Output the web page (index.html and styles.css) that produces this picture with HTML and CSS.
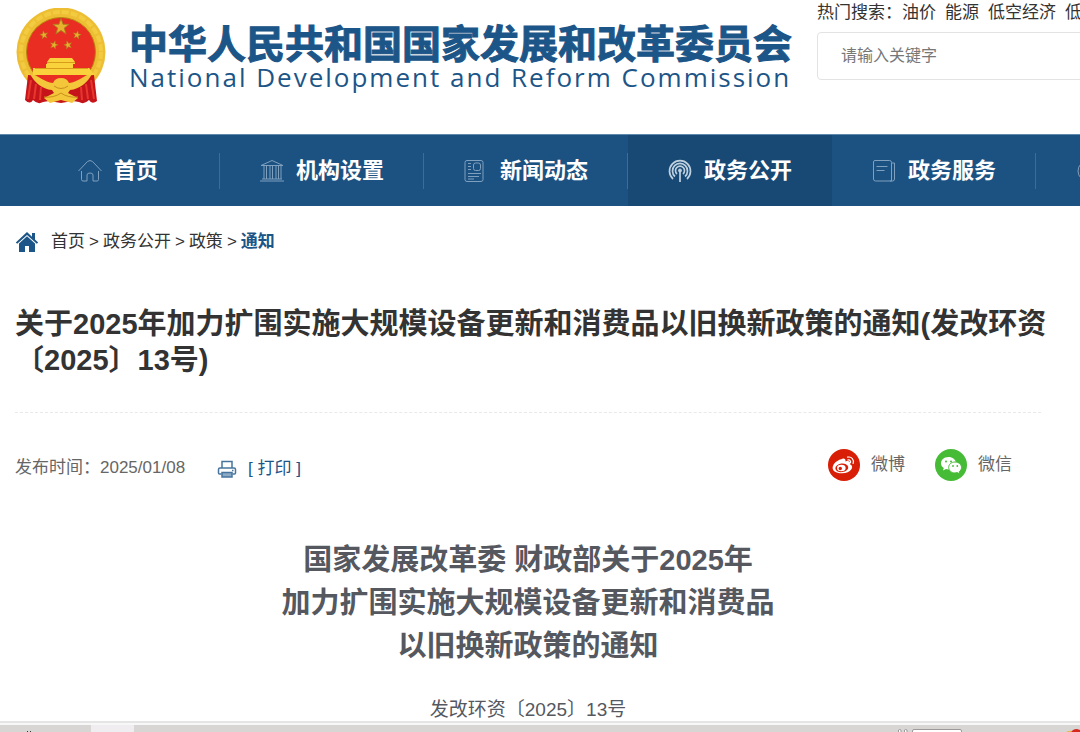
FILE: index.html
```html
<!DOCTYPE html>
<html lang="zh-CN">
<head>
<meta charset="utf-8">
<meta name="viewport" content="width=device-width, initial-scale=1">
<title>关于2025年加力扩围实施大规模设备更新和消费品以旧换新政策的通知</title>
<link rel="stylesheet" href="styles.css">
</head>
<body>
<header class="site-header">
  <a class="brand" href="#">
    <svg class="emblem" viewBox="0 0 90 96" aria-hidden="true">
      <defs><path id="star" d="M0-10 2.400-3.200 9.500-3.100 3.800 1.200 5.900 8.100 0 4-5.900 8.100-3.800 1.200-9.500-3.100-2.400-3.200Z"/></defs>
      <circle cx="45" cy="44" r="44.500" fill="#edbe33"/>
      <circle cx="45" cy="44" r="40" fill="none" stroke="#f3cb40" stroke-width="4" stroke-dasharray="7 2"/>
      <circle cx="45" cy="44" r="34.500" fill="#e92d22" stroke="#b8860f" stroke-width="1"/>
      <g fill="#e8b02c" stroke="#a77a1c" stroke-width="1">
        <use href="#star" transform="translate(45 19) scale(.86)"/>
        <use href="#star" transform="translate(28 27) scale(.43) rotate(-12)"/>
        <use href="#star" transform="translate(61 27) scale(.43) rotate(12)"/>
        <use href="#star" transform="translate(38 37) scale(.43) rotate(15)"/>
        <use href="#star" transform="translate(52 37) scale(.43) rotate(-15)"/>
      </g>
      <path fill="#fad33c" d="M34 50h22l3 4v2h-2v4h16l5 7H17v-7h13v-4h1v-2z"/>
      <path fill="#c5141a" d="M12 67c9 0 11 8 21 9l12 2 12-2c10-1 12-9 21-9l3 26q-5 4-8-1-5 5-10 2l-6-1-12 2-12-2-6 1q-5 3-10-2-3 5-8 0z"/>
      <path d="M15 72l-3 19M20 76l-2 15M25 79l-1 13M75 72l3 19M70 76l2 15M65 79l1 13" stroke="#e8382e" stroke-width="2"/>
      <path fill="#f4c63a" d="M14 66c10 2 14 8 23 9q2-5 8-5t8 5c9-1 13-7 23-9-5 9-12 15-22 16l-2 3 10 5-6 5-11-3-11 3-6-5 10-5-2-3C26 81 19 75 14 66z"/>
      <path d="M17 60h56l5 7H17z" fill="#fad33c"/>
      <path d="M31 54.500h28M19 60.500h53" stroke="#d99b1a" fill="none"/>
      <path d="M38 78q7 5 14 0M28 89q10 1 17-4 7 5 17 4" stroke="#c98f1b" fill="none"/>
    </svg>
    <span class="brand-text">
      <span class="brand-cn">中华人民共和国国家发展和改革委员会</span>
      <span class="brand-en">National Development and Reform Commission</span>
    </span>
  </a>
  <div class="search">
    <div class="hot"><span>热门搜索：</span><a href="#">油价</a><a href="#">能源</a><a href="#">低空经济</a><a href="#">低空</a></div>
    <input class="search-box" type="text" aria-label="搜索" placeholder="请输入关键字">
  </div>
</header>

<nav class="main-nav" aria-label="主导航">
  <a class="nav-item" href="#">
    <svg class="nav-icon" viewBox="0 0 24 24"><path d="M.5 12 9.500 2.500Q12 .5 14.500 2.500L23.500 12M3.500 12v8.500q0 1.500 1.500 1.500h4v-6q0-2 3-2t3 2v6h4q1.500 0 1.500-1.500V12"/></svg>首页</a>
  <a class="nav-item" href="#">
    <svg class="nav-icon" viewBox="0 0 24 24"><path d="M1 6.500 12 1.500l11 5zM0 22h24M2 20h20M4 7v13M6.500 7v13M10 7v13M12.500 7v13M16 7v13M18.500 7v13M21 7v13"/></svg>机构设置</a>
  <a class="nav-item" href="#">
    <svg class="nav-icon" viewBox="0 0 24 24"><rect x="1" y="1.500" width="18" height="21" rx="2"/><path d="M4 4.500h3M4 7.500h3M4 10.500h3M4 14.500h13M4 17.500h11M4 20h6"/><rect x="9.500" y="4" width="7" height="7.500" rx="2"/></svg>新闻动态</a>
  <a class="nav-item active" href="#" aria-current="page">
    <svg class="nav-icon" viewBox="0 0 24 24"><path stroke-width="1.700" d="M5 20A10.500 10.500 0 1 1 19 20M7 17.500a7.500 7.500 0 1 1 10 0M9 15a4.500 4.500 0 1 1 6 0M12 11v12"/><circle cx="12" cy="11.500" r="1.500" fill="currentColor"/></svg>政务公开</a>
  <a class="nav-item" href="#">
    <svg class="nav-icon" viewBox="0 0 24 24"><path d="M3 1.500h14.500q2 0 2 2V22H3.500q-2 0-2-2V3q0-1.500 1.500-1.500zM4.500 7.500h11M4.500 11.500h8M20 4h2.500v16q0 2-2 2H18"/></svg>政务服务</a>
  <a class="nav-item" href="#">
    <svg class="nav-icon" viewBox="0 0 24 24"><circle cx="12" cy="12" r="10"/><path d="M7 9h10M7 14h7"/></svg>互动交流</a>
</nav>

<main class="page">
  <nav class="crumbs" aria-label="当前位置">
    <svg class="home" viewBox="0 0 24 22" aria-hidden="true"><path d="M12 1 .8 11.500l1.400 1.300L12 4l9.800 8.800 1.400-1.300L20 8.500V2h-3v3.700zM12 5.300l-8 7.200V21h6v-6h4v6h6v-8.500z"/></svg>
    <a href="#">首页</a><span>&gt;</span><a href="#">政务公开</a><span>&gt;</span><a href="#">政策</a><span>&gt;</span><a class="current" href="#">通知</a>
  </nav>

  <h1 class="title">关于2025年加力扩围实施大规模设备更新和消费品以旧换新政策的通知(发改环资〔2025〕13号)</h1>

  <div class="content">
    <div class="meta">
      <span class="date">发布时间：2025/01/08</span>
      <button class="print" type="button">
        <svg class="printer" viewBox="0 0 20 18" aria-hidden="true"><path d="M5 8V1.500h10V8M4.500 14H2.500Q1.500 14 1.500 13V9.500Q1.500 8 3 8h14q1.500 0 1.500 1.500V13q0 1-1 1h-2M15 10.500h1.500"/><path class="tray" d="M5 12.500h10V17H5z"/></svg>
        [ 打印 ]</button>
      <div class="share">
        <a href="#"><svg class="share-icon" viewBox="0 0 32 32" aria-hidden="true"><circle cx="16" cy="16" r="16" fill="#d81e06"/><path fill="#fff" d="M14 10c2-1 4 0 3.500 2.500 3-1 5.500 0 4.500 2.800 5 2.200 1 9-8 9C3 24.300 2.500 17 8.500 12.500q3-2.500 5.500-2.500z"/><ellipse cx="13.800" cy="18.800" rx="6.500" ry="4.300" fill="#d81e06" transform="rotate(-8 13.800 18.800)"/><ellipse cx="13.300" cy="19" rx="4.300" ry="3.200" fill="#fff"/><circle cx="12.300" cy="19.500" r="1.700" fill="#d81e06"/><path d="M19.500 8.200c4-1 7 2.500 5.600 6.300M19.800 11c2-.5 3.300 1 2.700 2.800" fill="none" stroke="#fff" stroke-width="1.200" stroke-linecap="round"/></svg>微博</a>
        <a href="#"><svg class="share-icon" viewBox="0 0 32 32" aria-hidden="true"><circle cx="16" cy="16" r="16" fill="#46bb36"/><path fill="#fff" d="M13.500 8C9 8 6 11 6 14.300c0 2 1 3.700 2.800 4.800L8 21.500l3-1.500 2.500.4C17.500 20.500 21 18 21 14.300 21 10.500 17.500 8 13.500 8z"/><path fill="#fff" stroke="#46bb36" d="M20 13c-3.700 0-6.300 2.300-6.300 5.400S16.500 24 20 24l2.300-.4 2.700 1.500-.8-2.300c1.500-1 2.300-2.600 2.300-4.300 0-3.200-3-5.500-6.500-5.500z"/><g fill="#46bb36"><circle cx="11" cy="12.500" r="1"/><circle cx="16" cy="12.500" r="1"/><circle cx="18" cy="17" r=".9"/><circle cx="22.300" cy="17" r=".9"/></g></svg>微信</a>
      </div>
    </div>

    <article class="article">
      <h2 class="doc-title">国家发展改革委 财政部关于2025年<br>加力扩围实施大规模设备更新和消费品<br>以旧换新政策的通知</h2>
      <p class="doc-number">发改环资〔2025〕13号</p>
    </article>
  </div>
</main>

<footer class="taskbar">
  <svg class="tray-left" viewBox="0 0 134 8" aria-hidden="true"><path fill="#efedef" d="M91 0h43v8H91z"/><path fill="#343c3c" d="M27 6h1v2h-1zM30 6h1v2h-1z"/></svg>
  <svg class="tray-right" viewBox="0 0 182 8" aria-hidden="true"><g fill="#fff" stroke="#9b9999"><path d="M.5 9V5q1-1 2.500 0v4M6.500 9V5q1-1 2.500 0v4M14.500 9V6q0-1.500 1.500-1.500h46q1.500 0 1.500 1.500v3"/><path d="M17 7.500h44"/></g><path fill="#e8b84a" d="M167 8q3-3 7-2v2z"/><path fill="#d5291f" d="M173 8q1-4 6-4l3 1v3z"/></svg>
</footer>
</body>
</html>
```

FILE: styles.css
```css
* { box-sizing: border-box; }

body {
  margin: 0;
  overflow-x: hidden;
  background: #fff;
  color: #333;
  font: 17px/24px "Liberation Sans", "Noto Sans CJK SC", sans-serif;
}

a { color: inherit; text-decoration: none; }
svg { display: block; flex: none; }

.site-header {
  display: flex;
  align-items: flex-start;
  gap: 21px;
  height: 134px;
  padding-left: 16px;
  white-space: nowrap;
}

.brand {
  display: flex;
  flex: none;
  gap: 23px;
  padding-top: 8px;
  color: #1c5587;
}

.emblem { width: 90px; height: 96px; }

.brand-text { display: flex; flex-direction: column; width: 667px; padding-top: 18px; }

.brand-cn {
  font-size: 39px;
  line-height: 38px;
  font-weight: 700;
  -webkit-text-stroke: 1px currentColor;
}

.brand-en {
  font-family: "Open Sans", "Noto Sans", sans-serif;
  font-size: 26px;
  line-height: 26px;
  letter-spacing: 2px;
}

.search { flex: 1 0 300px; padding-top: 1px; }

.hot { display: flex; gap: 9px; margin-bottom: 7px; }
.hot span { margin-right: -9px; }

.search-box {
  display: block;
  width: 100%;
  height: 48px;
  padding: 0 23px;
  border: 1px solid #e3e3e3;
  border-radius: 4px;
  background: #fff;
  color: #333;
  font: inherit;
  font-size: 16px;
}
.search-box::placeholder { color: #777; opacity: 1; }

.main-nav {
  display: flex;
  height: 72px;
  padding-left: 16px;
  overflow: hidden;
  border-top: 1px solid #6089ae;
  background: #1c5282;
  color: #fff;
}

.nav-item {
  position: relative;
  display: flex;
  flex: none;
  align-items: center;
  justify-content: center;
  gap: 12px;
  width: 204px;
  font-size: 22px;
  font-weight: 700;
}
.nav-item:not(:last-child)::after {
  content: "";
  position: absolute;
  top: 18px;
  right: 0;
  width: 1px;
  height: 36px;
  background: #3d6c97;
}
.nav-item.active { background: #184975; }
.nav-item.active::after { display: none; }

.nav-icon {
  width: 24px;
  height: 24px;
  fill: none;
  stroke: currentColor;
  color: #7fa0be;
}
.active .nav-icon { color: #bfd0df; }

.page { padding: 0 15px; }

.crumbs { display: flex; align-items: center; gap: 4px; padding-top: 24px; }
.home { width: 24px; height: 22px; margin-right: 8px; fill: #1c5587; }
.current { color: #1c5587; font-weight: 700; }

.title {
  margin: 52px 0 0;
  font-size: 29px;
  line-height: 36px;
  font-weight: 700;
}

.content { margin-right: 24px; }

.meta {
  display: flex;
  align-items: center;
  margin-top: 34px;
  padding: 36px 29px 0 0;
  border-top: 1px dashed #e9e9e9;
  color: #666;
}

.date { margin-top: 6px; }

.print {
  display: flex;
  align-items: center;
  gap: 11px;
  margin: 8px 0 0 32px;
  padding: 0;
  border: 0;
  background: none;
  color: #1c5587;
  font: inherit;
}
.printer { width: 20px; height: 18px; fill: none; stroke: #47759e; stroke-width: 1.5; }
.tray { fill: #8dabc4; }

.share { display: flex; gap: 30px; margin-left: auto; }
.share a { display: flex; align-items: center; gap: 11px; }
.share-icon { width: 32px; height: 32px; }

.article { padding-top: 58px; color: #55585f; text-align: center; }

.doc-title {
  margin: 0;
  font-size: 29px;
  line-height: 43px;
  font-weight: 700;
}

.doc-number {
  margin: 31px 0 0;
  font-size: 19px;
  line-height: 22px;
}

.taskbar {
  display: flex;
  justify-content: space-between;
  border-top: 2px solid #e5e5e5;
  background: #d8d5d5;
  box-shadow: inset 0 2px #f7f7f7;
  padding-top: 2px;
}
.tray-left { width: 134px; height: 8px; }
.tray-right { width: 182px; height: 8px; }
```
